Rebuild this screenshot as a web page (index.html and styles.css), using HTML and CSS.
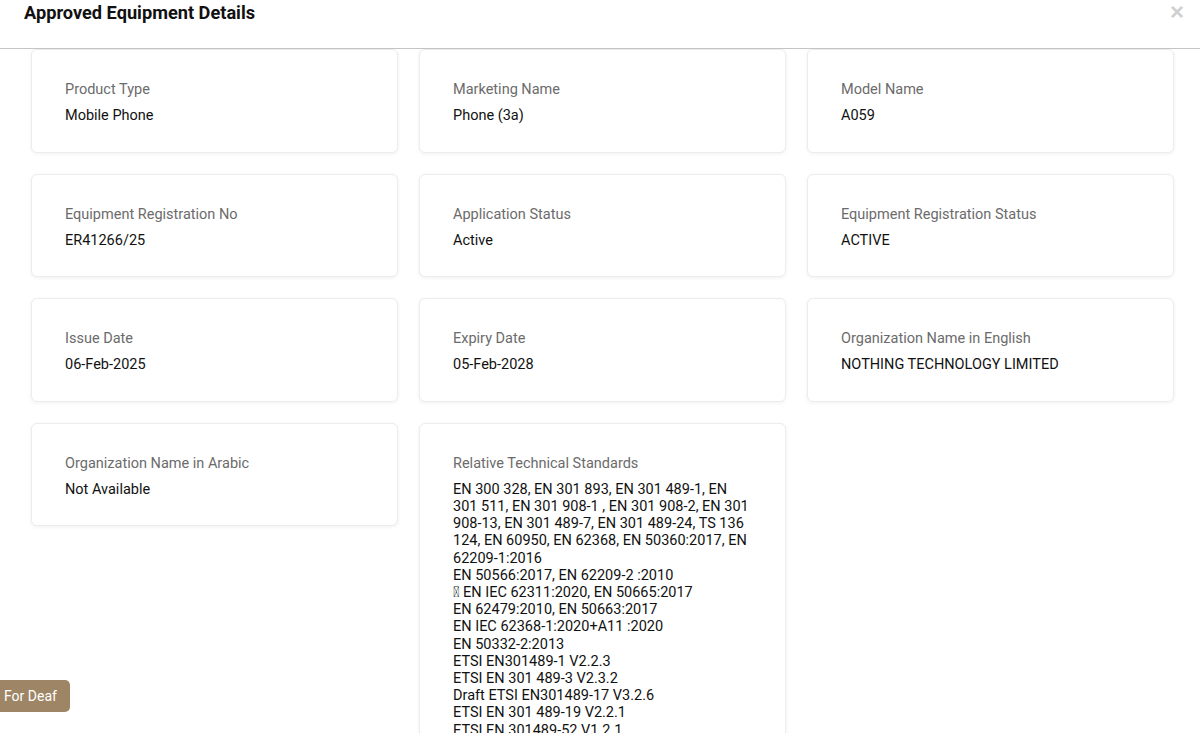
FILE: index.html
```html
<!DOCTYPE html>
<html lang="en">
<head>
<meta charset="utf-8">
<title>Approved Equipment Details</title>
<link rel="stylesheet" href="styles.css">
</head>
<body>
<div class="modal">
  <header class="modal-header">
    <h1 class="modal-title">Approved Equipment Details</h1>
    <button class="close" type="button" aria-label="Close">&times;</button>
  </header>
  <main class="modal-body">
    <div class="grid">
      <div class="card"><div class="label">Product Type</div><div class="value">Mobile Phone</div></div>
      <div class="card"><div class="label">Marketing Name</div><div class="value">Phone (3a)</div></div>
      <div class="card"><div class="label">Model Name</div><div class="value">A059</div></div>

      <div class="card"><div class="label">Equipment Registration No</div><div class="value">ER41266/25</div></div>
      <div class="card"><div class="label">Application Status</div><div class="value">Active</div></div>
      <div class="card"><div class="label">Equipment Registration Status</div><div class="value">ACTIVE</div></div>

      <div class="card"><div class="label">Issue Date</div><div class="value">06-Feb-2025</div></div>
      <div class="card"><div class="label">Expiry Date</div><div class="value">05-Feb-2028</div></div>
      <div class="card"><div class="label">Organization Name in English</div><div class="value">NOTHING TECHNOLOGY LIMITED</div></div>

      <div class="card"><div class="label">Organization Name in Arabic</div><div class="value">Not Available</div></div>
      <div class="card"><div class="label">Relative Technical Standards</div><div class="value">EN 300 328, EN 301 893, EN 301 489-1, EN 301 511, EN 301 908-1 , EN 301 908-2, EN 301 908-13, EN 301 489-7, EN 301 489-24, TS 136 124, EN 60950, EN 62368, EN 50360:2017, EN 62209-1:2016<br>EN 50566:2017, EN 62209-2 :2010<br>&#xF0B7; EN IEC 62311:2020, EN 50665:2017<br>EN 62479:2010, EN 50663:2017<br>EN IEC 62368-1:2020+A11 :2020<br>EN 50332-2:2013<br>ETSI EN301489-1 V2.2.3<br>ETSI EN 301 489-3 V2.3.2<br>Draft ETSI EN301489-17 V3.2.6<br>ETSI EN 301 489-19 V2.2.1<br>ETSI EN 301489-52 V1.2.1</div></div>
    </div>
  </main>
</div>
<button class="deaf" type="button">For Deaf</button>
</body>
</html>
```

FILE: styles.css
```css
html, body {
  margin: 0;
  padding: 0;
  height: 100%;
  overflow: hidden;
  background: #ffffff;
  font-family: Roboto, "Liberation Sans", Arial, sans-serif;
  color: #111;
}

.modal {
  height: 100vh;
  display: flex;
  flex-direction: column;
}

.modal-header {
  flex: 0 0 auto;
  height: 48px;
  border-bottom: 1px solid #c4c4c4;
  display: flex;
  align-items: flex-start;
  justify-content: space-between;
  padding: 0 16px 0 24px;
}

.modal-title {
  margin: 3px 0 0 0;
  font-size: 18.2px;
  font-weight: 700;
  line-height: 20px;
  color: #111;
}

.close {
  border: 0;
  background: none;
  padding: 0;
  margin-top: 1px;
  font-size: 24px;
  line-height: 22px;
  font-weight: 700;
  color: #d0d0d0;
  font-family: "Liberation Sans", Arial, sans-serif;
}

.modal-body {
  flex: 1 1 auto;
  overflow: hidden;
  padding: 0 25px 0 31px;
}

.grid {
  display: grid;
  grid-template-columns: repeat(3, 367px);
  column-gap: 21px;
  row-gap: 21px;
  align-items: start;
}

.card {
  border: 1px solid #ececec;
  border-radius: 6px;
  box-shadow: 0 1px 4px rgba(0, 0, 0, 0.06);
  padding: 30px 35px 27.4px 33px;
  background: #fff;
}

.label {
  font-size: 14.5px;
  line-height: 20px;
  color: #6b6b6b;
}

.value {
  margin-top: 7px;
  font-size: 14.5px;
  line-height: 17.2px;
  color: #111;
}

.deaf {
  position: fixed;
  left: 0;
  top: 680px;
  width: 70px;
  height: 32px;
  border: 0;
  border-radius: 0 5px 5px 0;
  background: #9e8566;
  color: #fff;
  font-family: Roboto, "Liberation Sans", Arial, sans-serif;
  font-size: 14px;
  text-align: left;
  padding: 0 0 0 4px;
}
```
